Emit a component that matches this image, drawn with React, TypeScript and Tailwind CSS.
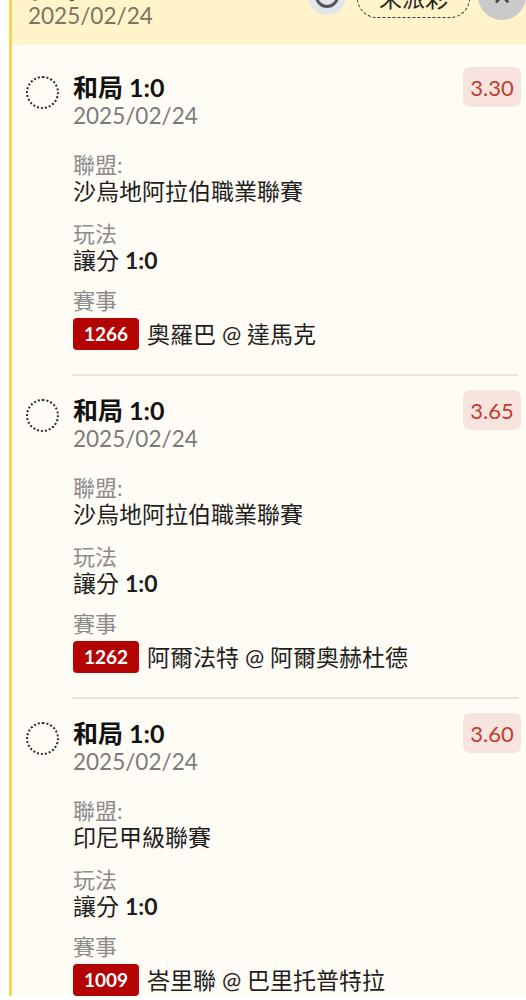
const latin = "font-['Lato','Noto_Sans_CJK_TC',sans-serif]";

type Bet = {
  odds: string;
  league: string;
  play: string;
  code: string;
  match: string;
};

const bets: Bet[] = [
  { odds: "3.30", league: "沙烏地阿拉伯職業聯賽", play: "讓分 1:0", code: "1266", match: "奧羅巴 @ 達馬克" },
  { odds: "3.65", league: "沙烏地阿拉伯職業聯賽", play: "讓分 1:0", code: "1262", match: "阿爾法特 @ 阿爾奧赫杜德" },
  { odds: "3.60", league: "印尼甲級聯賽", play: "讓分 1:0", code: "1009", match: "峇里聯 @ 巴里托普特拉" },
];

function Header() {
  return (
    <div className="-mt-[30px] flex h-[75px] items-start justify-between bg-[#fff3c9] pl-[16px]">
      <div className="flex flex-col">
        <div className="h-[32px] pt-[4px] text-[25px] leading-[28px] font-bold text-[#1a1a1a]">和局 1:0</div>
        <div className="text-[22.5px] leading-[28px] text-[#7a7461]">2025/02/24</div>
      </div>
      <div className="flex items-start">
        <div className="mt-[7px] flex h-[38px] w-[38px] items-center justify-center rounded-full bg-[#e3e5ec]">
          <div className="h-[24px] w-[24px] rounded-full border-[3px] border-[#555]" />
        </div>
        <div className="mt-[8px] ml-[11px] flex h-[40px] w-[113px] items-center justify-center rounded-full border-[1.5px] border-dashed border-[#333] text-[23px] text-[#222]">
          未派彩
        </div>
        <div className="mt-[2px] ml-[8px] flex h-[48px] w-[48px] items-center justify-center rounded-full bg-[#cacaca] text-[24px] text-[#444]">
          ✕
        </div>
      </div>
    </div>
  );
}

function Field({ label, children, className = "" }: { label: string; children: React.ReactNode; className?: string }) {
  return (
    <div className={className}>
      <div className="h-[26px] text-[22px] leading-[26px] text-[#8b8b8b]">{label}</div>
      <div className="h-[26px] text-[23px] leading-[26px] text-[#1e1e1e]">{children}</div>
    </div>
  );
}

function BetItem({ bet, last }: { bet: Bet; last: boolean }) {
  return (
    <div className="pt-[14px]">
      <div className="flex items-start pr-[5px] pl-[14px]">
        <div className="mt-[9px] h-[33px] w-[33px] shrink-0 rounded-full border-2 border-dotted border-[#2a2a2a]" />
        <div className="ml-[14px] flex-1 pt-[6px]">
          <div className="h-[28px] text-[25px] leading-[28px] font-bold text-[#111]">和局 1:0</div>
          <div className="h-[30px] text-[22.5px] leading-[30px] text-[#7b7b7b]">2025/02/24</div>
          <Field label="聯盟:" className="mt-[21px]">{bet.league}</Field>
          <Field label="玩法" className="mt-[17px]">
            讓分 <span className="font-bold">1:0</span>
          </Field>
          <div className="mt-[15px]">
            <div className="h-[26px] text-[22px] leading-[26px] text-[#8b8b8b]">賽事</div>
            <div className="mt-[4px] flex h-[32px] items-center">
              <span className="flex h-[32px] w-[66px] items-center justify-center rounded-[4px] bg-[#b40303] text-[19px] font-bold text-white">
                {bet.code}
              </span>
              <span className="ml-[8px] text-[23px] leading-[26px] text-[#1e1e1e]">{bet.match}</span>
            </div>
          </div>
        </div>
        <div className="flex h-[40px] w-[58px] items-center justify-center rounded-[7px] bg-[#f8e4df] text-[22px] text-[#c23a30]">
          {bet.odds}
        </div>
      </div>
      {!last && <div className="mt-[24px] mr-[8px] ml-[60px] h-[2px] bg-[#e7e4dd]" />}
    </div>
  );
}

export default function App() {
  return (
    <div className={`min-h-screen overflow-hidden bg-white pl-[9px] ${latin}`}>
      <div className="min-h-screen border-l-[3px] border-[#f4d65b] bg-[#fffcf5]">
        <Header />
        <div className="pt-[8px]">
          {bets.map((b, i) => (
            <BetItem key={b.code} bet={b} last={i === bets.length - 1} />
          ))}
        </div>
      </div>
    </div>
  );
}
